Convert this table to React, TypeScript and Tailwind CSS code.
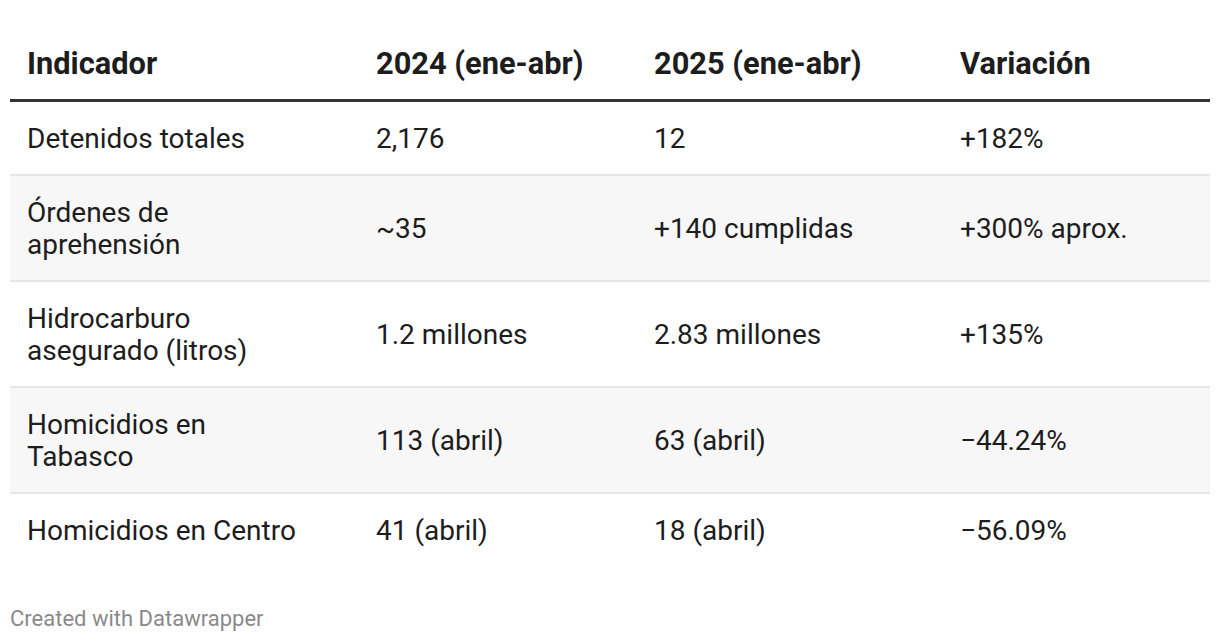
import React from 'react';

const rows = [
  { indicador: 'Detenidos totales', y2024: '2,176', y2025: '12', variacion: '+182%' },
  { indicador: 'Órdenes de aprehensión', y2024: '~35', y2025: '+140 cumplidas', variacion: '+300% aprox.' },
  { indicador: 'Hidrocarburo asegurado (litros)', y2024: '1.2 millones', y2025: '2.83 millones', variacion: '+135%' },
  { indicador: 'Homicidios en Tabasco', y2024: '113 (abril)', y2025: '63 (abril)', variacion: '−44.24%' },
  { indicador: 'Homicidios en Centro', y2024: '41 (abril)', y2025: '18 (abril)', variacion: '−56.09%' },
];

const App: React.FC = () => {
  return (
    <div className="w-[1220px] h-[642px] bg-white px-[10px] pt-[30px] text-[#1d1d1d] font-['Roboto',sans-serif]">
      <table className="w-[1200px] table-fixed border-collapse">
        <colgroup>
          <col className="w-[349px]" />
          <col className="w-[278px]" />
          <col className="w-[306px]" />
          <col className="w-[267px]" />
        </colgroup>
        <thead>
          <tr className="border-b-[3px] border-[#333333]">
            <th className="text-left font-bold text-[30.8px] leading-[36px] pl-[17px] pt-[16px] pb-[17px]">Indicador</th>
            <th className="text-left font-bold text-[30.8px] leading-[36px] pl-[17px] pt-[16px] pb-[17px]">2024 (ene-abr)</th>
            <th className="text-left font-bold text-[30.8px] leading-[36px] pl-[17px] pt-[16px] pb-[17px]">2025 (ene-abr)</th>
            <th className="text-left font-bold text-[30.8px] leading-[36px] pl-[17px] pt-[16px] pb-[17px]">Variación</th>
          </tr>
        </thead>
        <tbody>
          {rows.map((row, index) => (
            <tr
              key={index}
              className={`${index % 2 === 1 ? 'bg-[#f7f7f7]' : 'bg-white'} ${index < rows.length - 1 ? 'border-b-2 border-[#e6e6e6]' : ''}`}
            >
              <td className="text-[28px] leading-[32px] pl-[17px] pr-[55px] pt-[21px] pb-[19px]">{row.indicador}</td>
              <td className="text-[28px] leading-[32px] pl-[17px] pt-[21px] pb-[19px]">{row.y2024}</td>
              <td className="text-[28px] leading-[32px] pl-[17px] pt-[21px] pb-[19px]">{row.y2025}</td>
              <td className="text-[28px] leading-[32px] pl-[17px] pt-[21px] pb-[19px]">{row.variacion}</td>
            </tr>
          ))}
        </tbody>
      </table>
      <p className="mt-[39px] text-[22px] leading-[28px] text-[#8a8a8a]">Created with Datawrapper</p>
    </div>
  );
};

export default App;
